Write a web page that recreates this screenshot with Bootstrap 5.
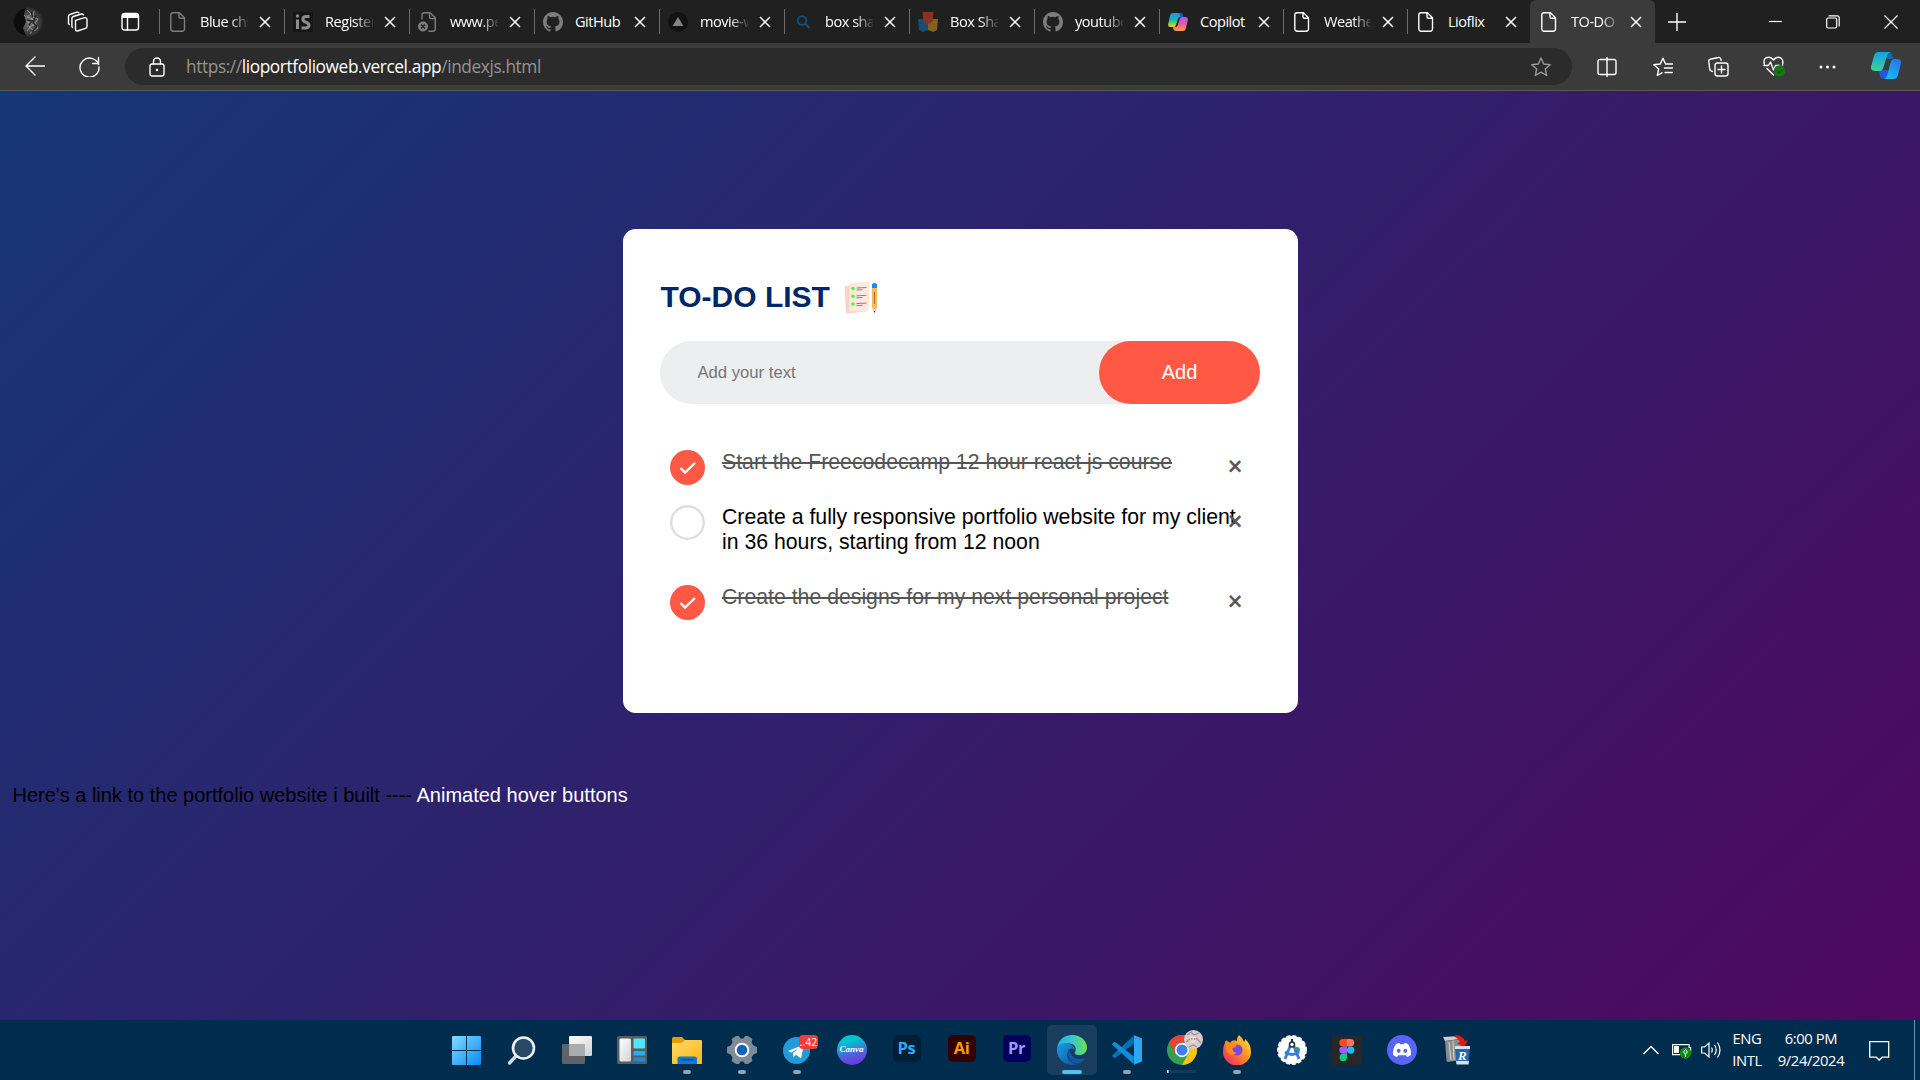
<!DOCTYPE html>
<html lang="en">
<head>
<meta charset="utf-8">
<meta name="viewport" content="width=device-width, initial-scale=1">
<title>TO-DO LIST</title>
<link rel="stylesheet" href="https://cdn.jsdelivr.net/npm/bootstrap@5.3.0/dist/css/bootstrap.min.css">
<style>
  body { width:1920px; height:1080px; overflow:hidden; font-family:"Open Sans","Noto Sans",sans-serif; color:#fff; line-height:1.2; }
  svg { display:block; flex:none; }
  .ln { fill:none; stroke:currentColor; stroke-width:1.4; stroke-linecap:round; stroke-linejoin:round; }
  /* browser tabs */
  .tabstrip { height:43px; background:#202020; }
  .avatar { width:30px; height:30px; margin-left:13px; }
  .btab { width:125px; height:43px; font-size:15px; padding:0 13px 0 0; }
  .btab.narrow { width:124px; }
  .btab::before { content:""; width:1px; height:25px; background:#6b6b6b; flex:none; }
  .btab.current { background:#3b3b3b; border-radius:6px 6px 0 0; width:125px; }
  .btab.current::before { background:transparent; }
  .fav { width:20px; height:20px; margin-left:8px; }
  .fav.dim { color:#7d7d7d; }
  .btab .ttl { width:50px; margin-left:12px; height:20px; line-height:18px; overflow:hidden; white-space:nowrap; font-size:14.6px; letter-spacing:-.5px;
    -webkit-mask-image:linear-gradient(90deg,#000 62%,transparent 104%); mask-image:linear-gradient(90deg,#000 62%,transparent 104%); }
  .btab .ttl.whole { -webkit-mask-image:none; mask-image:none; }
  .btab .cls { margin-left:11px; }
  /* toolbar */
  .toolrow { height:48px; background:#3b3b3b; border-bottom:1px solid #5a5a5a; padding-left:25px; }
  .urlpill { width:1447px; height:37px; border-radius:19px; background:#2b2b2b; margin-left:25px; padding:0 21px 0 24px; }
  .urltxt { font-size:17.3px; letter-spacing:-.4px; color:#949494; margin-left:21px; padding-top:1px; }
  .urltxt b { font-weight:400; color:#fff; }
  /* page */
  .sitepage { height:929px; background:linear-gradient(135deg,#153677,#4e085f); font-family:"Liberation Sans",Arial,sans-serif; color:#000; }
  .todo-app { width:675px; height:484px; margin:138px auto 0 623px; padding:50px 38px 0 37px; background:#fff; border-radius:12.5px; }
  .todo-app h2 { font-size:30px; font-weight:700; color:#002765; line-height:35px; height:37px; }
  .todo-app h2 span { margin:-3px 0 0 .5px; }
  .todo-row { height:63px; margin-top:25px; background:#edeef0; border-radius:38px; padding-left:37.5px; }
  .todo-row input { border:0; background:transparent; outline:0; font-size:16.67px; padding:0; color:#555; }
  .todo-row input::placeholder { color:#757575; opacity:1; }
  .add-btn { width:161px; height:63px; border:0; border-radius:50px; background:#ff5945; color:#fff; font-size:20px; padding:0 0 2px; }
  .todo-list { margin-top:31px; }
  .todo-list li { position:relative; font-size:21.25px; line-height:25px; padding:15px 0 15px 62px; }
  .todo-list li.done { color:#555; text-decoration:line-through; }
  .tick { position:absolute; left:10px; top:15px; }
  .rm { position:absolute; right:0; top:6px; width:50px; height:50px; line-height:50px; text-align:center; font-size:25px; color:#555; -webkit-text-stroke:.6px #555; text-decoration:none; display:inline-block; }
  .linkline { font-size:20px; line-height:23px; margin:71px 0 0 12.5px; }
  .linkline a { color:#fff; text-decoration:none; }
  /* taskbar */
  .winbar { height:60px; background:#002c4e; }
  .apps { margin-left:439px; }
  .app { position:relative; width:55px; height:60px; }
  .app.open::after { content:""; position:absolute; left:24px; bottom:6px; width:8px; height:4px; border-radius:2px; background:#93a3b1; }
  .app.active::before { content:""; position:absolute; left:3px; top:5px; width:50px; height:50px; border-radius:5px; background:#193e5d; }
  .app.active::after { left:18px; width:20px; background:#4cc2ff; }
  .app svg { position:relative; }
  .adobe { width:28px; height:27px; border-radius:5px; font-weight:700; font-size:16.5px; line-height:25px; text-align:center; letter-spacing:-.4px; }
  .count { position:absolute; left:30px; top:15px; width:19px; height:14px; border-radius:4px; background:#f23c34; font-size:10.5px; line-height:14px; text-align:center; }
  .canva { width:30px; height:30px; border-radius:50%; background:linear-gradient(165deg,#00c4cc 25%,#4a68d8 60%,#7d2ae8 95%); font:italic 700 9px/29px "Liberation Serif",serif; text-align:center; }
  .tray { margin-left:auto; font-size:14.8px; letter-spacing:-.4px; line-height:22px; text-align:center; }
  .tray div { position:relative; top:-1px; }
  .tray .edge { top:0; width:1px; height:60px; background:#7690a5; margin:0 5px 0 24px; }
</style>
<script src="https://cdn.jsdelivr.net/npm/bootstrap@5.3.0/dist/js/bootstrap.bundle.min.js"></script>
</head>
<body class="d-flex flex-column m-0">
<svg width="0" height="0" class="position-absolute">
  <defs>
    <linearGradient id="gEdge" x1="0" y1="0" x2="1" y2="0"><stop offset="0" stop-color="#2aa9e8"/><stop offset=".5" stop-color="#37c6d0"/><stop offset="1" stop-color="#6be04c"/></linearGradient>
    <linearGradient id="gEdge2" x1="0" y1="0" x2="1" y2="1"><stop offset="0" stop-color="#1b9de2"/><stop offset="1" stop-color="#0c4f9e"/></linearGradient>
    <linearGradient id="gWin" x1="0" y1="0" x2="1" y2="1"><stop offset="0" stop-color="#7fdcff"/><stop offset="1" stop-color="#0a8af5"/></linearGradient>
    <linearGradient id="gFold" x1="0" y1="0" x2="1" y2="1"><stop offset="0" stop-color="#ffd968"/><stop offset="1" stop-color="#fbb716"/></linearGradient>
    <linearGradient id="gGrey" x1="0" y1="0" x2="1" y2="1"><stop offset="0" stop-color="#fff"/><stop offset="1" stop-color="#cfd3d6"/></linearGradient>
    <linearGradient id="gFox" x1="1" y1="0" x2="0" y2="1"><stop offset="0" stop-color="#fff44f"/><stop offset=".4" stop-color="#ff9a1f"/><stop offset="1" stop-color="#f5156c"/></linearGradient>
    <linearGradient id="gCoA" x1="0" y1="0" x2="0" y2="1"><stop offset="0" stop-color="#129ff0"/><stop offset=".5" stop-color="#19b6a8"/><stop offset="1" stop-color="#f6d21c"/></linearGradient>
    <linearGradient id="gCoB" x1="0" y1="0" x2="0" y2="1"><stop offset="0" stop-color="#a35cf5"/><stop offset=".5" stop-color="#f0569b"/><stop offset="1" stop-color="#ff9b45"/></linearGradient>
    <linearGradient id="gCoC" x1=".4" y1="0" x2=".3" y2="1"><stop offset="0" stop-color="#11a3e8"/><stop offset="1" stop-color="#3fd18d"/></linearGradient>
    <linearGradient id="gCoD" x1=".8" y1="0" x2=".3" y2="1"><stop offset="0" stop-color="#2373ea"/><stop offset="1" stop-color="#17bdf3"/></linearGradient>
    <radialGradient id="gLion"><stop offset="0" stop-color="#777"/><stop offset="1" stop-color="#2c2c2c"/></radialGradient>
    <symbol id="doc" viewBox="0 0 20 20"><path class="ln" d="M5 .8h6.500l5 5V17a2.200 2.200 0 0 1-2.200 2.200H5A2.200 2.200 0 0 1 2.800 17V3A2.200 2.200 0 0 1 5 .8zM11 1v3.800A1.500 1.500 0 0 0 12.500 6.300h4"/></symbol>
    <symbol id="x" viewBox="0 0 12 12"><path d="M1 1l10 10M11 1L1 11" fill="none" stroke="currentColor" stroke-width="1.5"/></symbol>
    <symbol id="gh" viewBox="0 0 16 16"><path fill="currentColor" d="M8 0C3.580 0 0 3.580 0 8c0 3.540 2.290 6.530 5.470 7.590.4.070.55-.17.55-.38 0-.19-.010-.82-.010-1.490-2.010.37-2.530-.49-2.690-.94-.09-.23-.48-.94-.82-1.130-.28-.15-.68-.52-.010-.53.63-.010 1.080.58 1.230.82.72 1.210 1.870.87 2.330.66.070-.52.28-.87.51-1.070-1.780-.2-3.640-.89-3.640-3.950 0-.87.31-1.590.82-2.150-.08-.2-.36-1.020.08-2.120 0 0 .67-.21 2.200.82a7.600 7.600 0 0 1 4 0c1.530-1.040 2.200-.82 2.200-.82.44 1.100.16 1.920.08 2.120.51.56.82 1.270.82 2.150 0 3.070-1.870 3.750-3.650 3.950.29.25.54.73.54 1.480 0 1.070-.010 1.930-.010 2.200 0 .21.15.46.55.38A8 8 0 0 0 16 8c0-4.420-3.580-8-8-8z"/></symbol>
    <symbol id="tickon" viewBox="0 0 35 35"><circle cx="17.500" cy="17.500" r="17.500" fill="#ff5945"/><path d="M10.500 18l4.500 4.600 10-9.600" fill="none" stroke="#fff" stroke-width="2.300"/></symbol>
  </defs>
</svg>

<header>
  <div class="tabstrip d-flex align-items-center">
    <svg class="avatar" viewBox="0 0 30 30"><circle cx="15" cy="15" r="14.500" fill="url(#gLion)"/><path d="M1 12Q4 2 13 .8L11 8l2 7-3 6 3 8.200Q1 26 .5 15z" fill="#0d0d0d"/><path d="M14 3l4 4-4 3 6 2-5 3 6 3-5 2 4 3-3 4M21 4l-1 6 5 2-3 4 3 5-4 3M11 8l2 2M17 20l-3 4" fill="none" stroke="#a5a5a5" stroke-width=".8"/><path d="M18 5l2 5M23 8l-3 8 4 3-5 6M14 13l5 1-3 4" fill="none" stroke="#252525" stroke-width="1.300"/></svg>
    <svg width="22" height="22" viewBox="0 0 22 22" style="margin-left:24px"><path class="ln" d="M8.500 9.300l9-2.600a2 2 0 0 1 2.500 1.900v6.800a2 2 0 0 1-1.500 2l-8 2.600A1.500 1.500 0 0 1 8.500 18.500zM5.500 16.500l-.6-.8V7.500a2 2 0 0 1 1.400-2l8-2.500a2 2 0 0 1 2.200.9M2.300 13.500L1.500 12.500V5.500a2 2 0 0 1 1.400-2l7-2.300a2 2 0 0 1 2 .6" /></svg>
    <svg width="19" height="20" viewBox="0 0 19 20" style="margin-left:32px"><rect class="ln" x="1" y="1.500" width="16.500" height="16.500" rx="2.500"/><path d="M1 3.500A2.500 2.500 0 0 1 3.500 1h12A2.500 2.500 0 0 1 18 3.500V6H1z" fill="#fff"/><path class="ln" d="M6.500 6v12"/></svg>
    <nav class="d-flex" style="margin-left:19px">
      <div class="btab d-flex align-items-center"><svg class="fav dim"><use href="#doc"/></svg><span class="ttl">Blue chip</span><svg class="cls" width="12" height="12"><use href="#x"/></svg></div>
      <div class="btab d-flex align-items-center"><svg class="fav" viewBox="0 0 20 20"><rect width="20" height="20" fill="#161616"/><g fill="none" stroke="#8c8c8c" stroke-width="3"><path d="M4.500 7.500V17M16.500 4.500H13Q10 4.500 10 7t3 3.300 3 3-3 2.700H8.500"/></g><circle cx="4.500" cy="4" r="1.700" fill="#8c8c8c"/></svg><span class="ttl">Register</span><svg class="cls" width="12" height="12"><use href="#x"/></svg></div>
      <div class="btab d-flex align-items-center"><svg class="fav dim" viewBox="0 0 20 20"><path class="ln" d="M4 7V3A2.200 2.200 0 0 1 6.200.8H12l5.300 5V17a2.200 2.200 0 0 1-2.200 2.200H11M11.500 1v4a1.500 1.500 0 0 0 1.500 1.500h4"/><circle cx="5" cy="14.500" r="5" fill="currentColor"/><path d="M3 12.500l4 4M7 12.500l-4 4" stroke="#202020" stroke-width="1.300"/></svg><span class="ttl">www.pe</span><svg class="cls" width="12" height="12"><use href="#x"/></svg></div>
      <div class="btab d-flex align-items-center"><svg class="fav dim"><use href="#gh"/></svg><span class="ttl whole">GitHub</span><svg class="cls" width="12" height="12"><use href="#x"/></svg></div>
      <div class="btab d-flex align-items-center"><svg class="fav" viewBox="0 0 20 20"><circle cx="10" cy="10" r="10" fill="#121212"/><path d="M10 5l5.300 9H4.700z" fill="#858585"/></svg><span class="ttl">movie-w</span><svg class="cls" width="12" height="12"><use href="#x"/></svg></div>
      <div class="btab d-flex align-items-center"><svg class="fav" viewBox="0 0 20 20"><g fill="none" stroke="#14507f" stroke-width="1.800"><circle cx="9" cy="8.500" r="4.300"/><path d="M12 11.500l4.500 4.500"/></g></svg><span class="ttl">box sha</span><svg class="cls" width="12" height="12"><use href="#x"/></svg></div>
      <div class="btab d-flex align-items-center"><svg class="fav" viewBox="0 0 20 20"><path d="M0 7h10v11l-5 2-4-2z" fill="#174d73"/><path d="M10 7h10l-1 11-4 2-5-2z" fill="#87601b"/><path d="M4.500 0h11l-1 10-4.500 2-4.500-2z" fill="#87331f"/></svg><span class="ttl">Box Sha</span><svg class="cls" width="12" height="12"><use href="#x"/></svg></div>
      <div class="btab d-flex align-items-center"><svg class="fav dim"><use href="#gh"/></svg><span class="ttl">youtube</span><svg class="cls" width="12" height="12"><use href="#x"/></svg></div>
      <div class="btab narrow d-flex align-items-center"><svg class="fav" viewBox="0 0 20 20"><path d="M5 1h7.500q1.500 0 2 2l.5 2H12q-1.500 0-2 2l-2 6q-.7 2-2 2H2.500Q-.5 15 .2 12L2 4Q2.700 1 5 1z" fill="url(#gCoA)"/><path d="M11 1h2q1.500 0 2 2l.7 2H12.500z" fill="#2150d0"/><path d="M15 19H8q-2 0-2.600-2L5 15h2.500q1.700 0 2.200-2l2-6q.6-2 2.300-2H17q3.500 0 2.700 3.500L18 16q-.7 3-3 3z" fill="url(#gCoB)"/></svg><span class="ttl whole">Copilot</span><svg class="cls" width="12" height="12"><use href="#x"/></svg></div>
      <div class="btab narrow d-flex align-items-center"><svg class="fav"><use href="#doc"/></svg><span class="ttl">Weathe</span><svg class="cls" width="12" height="12"><use href="#x"/></svg></div>
      <div class="btab narrow d-flex align-items-center" style="width:123px"><svg class="fav"><use href="#doc"/></svg><span class="ttl whole">Lioflix</span><svg class="cls" width="12" height="12"><use href="#x"/></svg></div>
      <div class="btab current d-flex align-items-center"><svg class="fav"><use href="#doc"/></svg><span class="ttl">TO-DO</span><svg class="cls" width="12" height="12"><use href="#x"/></svg></div>
    </nav>
    <svg width="18" height="18" viewBox="0 0 18 18" style="margin-left:13px"><path class="ln" d="M9 .5v17M.5 9h17"/></svg>
    <div class="d-flex align-items-center ms-auto" style="margin-right:22px;gap:44px">
      <svg width="13" height="13"><path d="M0 6.500h13" stroke="#fff" stroke-width="1.200"/></svg>
      <svg width="14" height="14" viewBox="0 0 14 14"><rect class="ln" x=".7" y="3" width="10" height="10" rx="1.500" style="stroke-width:1.200"/><path class="ln" d="M3 .8h8A2 2 0 0 1 13.200 3v8" style="stroke-width:1.200"/></svg>
      <svg width="14" height="14" viewBox="0 0 14 14"><path d="M.5.500l13 13M13.500.500l-13 13" stroke="#fff" stroke-width="1.200"/></svg>
    </div>
  </div>
  <div class="toolrow d-flex align-items-center">
    <svg width="20" height="20" viewBox="0 0 20 20" style="margin-top:-2px"><path class="ln" d="M10 1L1 10l9 9M1 10h18.500"/></svg>
    <svg width="21" height="21" viewBox="0 0 21 21" style="margin:-1px 0 0 34px"><path class="ln" d="M19.500 8.500A9.500 9.500 0 1 0 20 11M19.500 1.500v6h-6"/></svg>
    <div class="urlpill d-flex align-items-center">
      <svg width="16" height="20" viewBox="0 0 16 20"><rect class="ln" x="1" y="7" width="14" height="12" rx="2"/><path class="ln" d="M4.500 7V4.500a3.500 3.500 0 0 1 7 0V7"/><circle cx="8" cy="13" r="1.200" fill="#fff"/></svg>
      <span class="urltxt">https://<b>lioportfolioweb.vercel.app</b>/indexjs.html</span>
      <svg class="ms-auto" width="20" height="20" viewBox="0 0 20 20" style="color:#9a9a9a"><path class="ln" d="M10 1l2.700 6 6.500.7-4.900 4.300 1.400 6.500L10 15.200l-5.700 3.300L5.700 12 .8 7.700 7.300 7z"/></svg>
    </div>
    <svg width="20" height="20" viewBox="0 0 20 20" style="margin-left:25px"><path class="ln" d="M7 2.500H3A2 2 0 0 0 1 4.500v11a2 2 0 0 0 2 2h4M13 2.500h4a2 2 0 0 1 2 2v11a2 2 0 0 1-2 2h-4M10 .5v19M10 2.500h3M7 2.500h3M7 17.500h6"/></svg>
    <svg width="20" height="20" viewBox="0 0 20 20" style="margin-left:36px"><path class="ln" d="M12.500 7L10 1.200 7.300 7 .8 7.700 5.700 12l-1.400 6.500L9 15.800M12.500 7h7M11.500 11h8M12 15.500h7.500"/></svg>
    <svg width="21" height="21" viewBox="0 0 21 21" style="margin-left:35px"><rect class="ln" x="7" y="7" width="13" height="13" rx="2.500"/><path class="ln" d="M13.500 10v7M10 13.500h7M4.500 15.500l-1.800-.8a2 2 0 0 1-1-1.500L.8 5.500a2 2 0 0 1 1.500-2.300l8-1.700a2 2 0 0 1 2.400 1.300l.4 1.500"/></svg>
    <svg width="23" height="21" viewBox="0 0 23 21" style="margin-left:34px"><path class="ln" d="M1.500 9Q-.5 1.500 5.500 1.200 8.500 1 10.500 4 12.500 1 15.500 1.200 21 1.800 19.500 9M1 9.500h4.500L7.500 6l3 8 2-4.500h4M4 12.500l6.500 6.500"/><circle cx="16.500" cy="15" r="5.800" fill="#107c10"/><path d="M14 15l2 2 3.500-3.500" fill="none" stroke="#3b3b3b" stroke-width="1.300"/></svg>
    <svg width="17" height="4" viewBox="0 0 17 4" style="margin-left:33px"><g fill="#fff"><circle cx="2" cy="2" r="1.500"/><circle cx="8.500" cy="2" r="1.500"/><circle cx="15" cy="2" r="1.500"/></g></svg>
    <svg width="30" height="27" viewBox="0 0 30 27" style="margin:-2px 0 0 35px"><path d="M18 0q2.500 0 3.300 3l1 4H17l-5-3z" fill="#0a6ea8"/><path d="M8 18h8l3 3-2 6h-4q-3 0-4-3z" fill="#2059dc"/><path d="M7.500 0H19q-2 1-3 4l-3.500 11q-1 4-4 4H4q-5 0-3.800-5L3 4Q4 0 7.500 0z" fill="url(#gCoC)"/><path d="M22.500 27H13q2.500-1 3.300-4l3-11.500q1-4.500 4-4.500H26q5 0 3.800 5L27 23q-1 4-4.500 4z" fill="url(#gCoD)"/></svg>
  </div>
</header>

<main class="sitepage overflow-hidden">
  <section class="todo-app">
    <h2 class="d-flex align-items-center m-0"><span>TO-DO LIST</span>
      <svg width="34" height="32" viewBox="0 0 34 32" style="margin-left:14px"><path d="M.5 4.500L6 3.500 22 29.500 3 31.500q-1 0-1-1z" fill="#ffd2c4"/><path d="M5.500.8L25.500 0l-.6 26.500q0 2.500-2.500 2.600l-17 .7z" fill="#ffe8dc"/><g fill="#3dff3a"><circle cx="9" cy="6.500" r="1.800"/><circle cx="9" cy="14.300" r="1.800"/><circle cx="9" cy="22" r="1.800"/></g><path d="M12.500 6l10-.5M12.500 8l6-.3M12.500 13.800l10-.5M12.500 15.800l6-.3M12.500 21.600l10-.5M12.500 23.600l6-.3" stroke="#83709b" stroke-width=".9"/><path d="M28 4h5v22h-5z" fill="#ffb654"/><path d="M28 2.500Q28 1 30.500 1T33 2.500V6h-5z" fill="#1688f0"/><path d="M30.500 10v12" stroke="#9a6a35" stroke-width=".9"/><path d="M28 26h5l-2.500 5z" fill="#f7bfae"/><path d="M29.700 29h1.600l-.8 2z" fill="#222"/></svg>
    </h2>
    <div class="todo-row d-flex align-items-center justify-content-between">
      <input type="text" class="flex-grow-1" placeholder="Add your text">
      <button class="add-btn">Add</button>
    </div>
    <ul class="todo-list list-unstyled mb-0">
      <li class="done"><svg class="tick" width="35" height="35"><use href="#tickon"/></svg>Start the Freecodecamp 12 hour react js course<span class="rm">×</span></li>
      <li><svg class="tick" width="35" height="35"><circle cx="17.500" cy="17.500" r="16.300" fill="#fff" stroke="#dedede" stroke-width="2.400"/></svg>Create a fully responsive portfolio website for my client<br>in 36 hours, starting from 12 noon<span class="rm">×</span></li>
      <li class="done"><svg class="tick" width="35" height="35"><use href="#tickon"/></svg>Create the designs for my next personal project<span class="rm">×</span></li>
    </ul>
  </section>
  <p class="linkline">Here's a link to the portfolio website i built ---- <a href="#">Animated hover buttons</a></p>
</main>

<footer class="winbar d-flex">
  <div class="apps d-flex">
    <div class="app d-flex align-items-center justify-content-center"><svg width="29" height="29" viewBox="0 0 29 29"><path fill="url(#gWin)" d="M0 1q0-1 1-1h13v14H0zM15 0h13q1 0 1 1v13H15zM0 15h14v14H1q-1 0-1-1zM15 15h14v13q0 1-1 1H15z"/></svg></div>
    <div class="app d-flex align-items-center justify-content-center"><svg width="28" height="29" viewBox="0 0 28 29"><path d="M9 19l-7.500 8" stroke="#d5dadd" stroke-width="3.400" stroke-linecap="round"/><circle cx="15.500" cy="12" r="10.500" fill="#284a66" stroke="#eef0f1" stroke-width="2.600"/></svg></div>
    <div class="app d-flex align-items-center justify-content-center"><svg width="30" height="28" viewBox="0 0 30 28"><rect y="8" width="23" height="20" rx="1" fill="#5f6367"/><rect x="7" width="23" height="20" rx="1" fill="url(#gGrey)"/><rect x="7" y="8" width="16" height="12" fill="#a9adb0"/></svg></div>
    <div class="app d-flex align-items-center justify-content-center"><svg width="30" height="28" viewBox="0 0 30 28"><rect width="30" height="28" rx="1.500" fill="#5a5d60"/><rect x="2.500" y="2.500" width="11.500" height="23" rx="1.500" fill="url(#gGrey)"/><rect x="16.500" y="2.500" width="11.500" height="10" rx="1" fill="#50e6ff"/><rect x="16.500" y="15" width="11.500" height="4.500" rx="1" fill="#28afea"/><rect x="16.500" y="21.500" width="11.500" height="4" rx="1" fill="#1490df"/></svg></div>
    <div class="app open d-flex align-items-center justify-content-center"><svg width="30" height="27" viewBox="0 0 30 27"><path d="M0 1.500Q0 0 1.500 0H10l3 3v6H0z" fill="#e0a100"/><path d="M0 6h9.500l3.500-3h16q1 0 1 1v23H1q-1 0-1-1z" fill="url(#gFold)"/><path d="M5.500 27v-5.500Q5.500 19.500 8 19.500h14.500q2.500 0 2.500 2V27z" fill="#1576cc"/><path d="M8.500 22.800h13" stroke="#0b4c8e" stroke-width="1.200"/></svg></div>
    <div class="app open d-flex align-items-center justify-content-center"><svg width="30" height="28" viewBox="0 0 30 28"><path d="M9 0h3l1.500 2.500h3L18 0h3l4.500 3-1 3.500 2 3L30 11v6l-3.500 1.500-2 3 1 3.500L21 28h-3l-1.500-2.500h-3L12 28H9l-4.500-3 1-3.500-2-3L0 17v-6l3.500-1.500 2-3-1-3.500z" fill="#7e8b96"/><circle cx="15" cy="14" r="6.300" fill="#0e63bd" stroke="#fff" stroke-width="2"/></svg></div>
    <div class="app open d-flex align-items-center justify-content-center"><svg width="27" height="27" viewBox="0 0 27 27"><circle cx="13.500" cy="13.500" r="13.500" fill="#239bd7"/><path d="M5 14l16-6.500-3 14-5-3.700-2.500 2.500-.5-4.300 6-5-7.500 4.500z" fill="#fff"/></svg><span class="count">..42</span></div>
    <div class="app d-flex align-items-center justify-content-center"><div class="canva">Canva</div></div>
    <div class="app d-flex align-items-center justify-content-center pb-1"><div class="adobe" style="background:#001e36;color:#31a8ff">Ps</div></div>
    <div class="app d-flex align-items-center justify-content-center pb-1"><div class="adobe" style="background:#330000;color:#ff9a00">Ai</div></div>
    <div class="app d-flex align-items-center justify-content-center pb-1"><div class="adobe" style="background:#00005b;color:#9999ff">Pr</div></div>
    <div class="app open active d-flex align-items-center justify-content-center"><svg width="30" height="30" viewBox="0 0 30 30"><path d="M0 14C1 4 8 0 15 0c9 0 15 6 15 12.500 0 5-4 7.500-7.500 7.500-4 0-5.500-1.500-4.500-3 1.500-2.500 1-8-5-8.500C6 8 1 11 0 14z" fill="url(#gEdge)"/><path d="M0 14C1 9.500 5.500 7.800 10 8.300c5 .5 8 4 8 7.500-1-3-5-3-6.500-.5C8 21 12 29 21.500 29 11 33-1 25 0 14z" fill="url(#gEdge2)"/><path d="M12 14.500C9 20 13.500 29.500 22 28.500q4-1.500 6.500-6Q25 24.500 21 24q-7-1-9-9.500z" fill="#0c5aa8"/></svg></div>
    <div class="app open d-flex align-items-center justify-content-center"><svg width="30" height="30" viewBox="0 0 30 30"><path d="M22 8.500L3.500 22.800q-.8.600-1.500 0l-1.500-1.300q-.8-.8 0-1.600L21.500 1z" fill="#0a6fb8"/><path d="M22 21.500L3.500 7.200q-.8-.6-1.500 0L.5 8.500q-.8.800 0 1.600L21.500 29z" fill="#118ed5"/><path d="M21.500 0L30 3.500v23L21.500 30q1-1 .5-3V3q.5-2-.5-3z" fill="#2aa9f2"/></svg></div>
    <div class="app d-flex align-items-center justify-content-center"><svg width="36" height="46" viewBox="0 0 36 46" style="left:3px"><circle cx="15" cy="23" r="15" fill="#34a04f"/><path d="M2 15.500A15 15 0 0 1 28 15.500H15l-6.500 11z" fill="#e94335"/><path d="M28 15.500A15 15 0 0 1 15 38l6.500-11.500q2-5-1.500-11z" fill="#fbc116"/><circle cx="15" cy="23" r="7.200" fill="#fff"/><circle cx="15" cy="23" r="5.500" fill="#3c80ee"/><circle cx="26.500" cy="12.500" r="9.500" fill="#d9ccd0"/><path d="M20 8l4-3 3 3 5-2M19 15l4-3M29 11l5 5M22 20l4-2 4 2" fill="none" stroke="#a08e97" stroke-width="1.300"/><path d="M23 10q3-3 6 0v4q-3 4-6 0z" fill="#f4d3cc"/><path d="M24 12h1.500M27 12h1.500" stroke="#7a5560"/><rect y="43" width="29" height="3" fill="#143a59"/><rect y="43" width="1.500" height="3" fill="#fff"/></svg></div>
    <div class="app open d-flex align-items-center justify-content-center"><svg width="28" height="30" viewBox="0 0 28 30"><path d="M16 0q4 3 5 7 1-1 1-3 6 5 6 13A14 13.500 0 0 1 0 17Q0 9 4 5q.5 3 3 3Q9 4 14 6q0-4 2-6z" fill="url(#gFox)"/><circle cx="14" cy="15" r="5.500" fill="#7a45d8"/><path d="M2 6q4 0 7 3l5 .5q-1 3-4.500 3.500Q9 17 14 18q-6 4-10-1z" fill="#ff8b1e"/></svg></div>
    <div class="app d-flex align-items-center justify-content-center"><svg width="30" height="30" viewBox="0 0 30 30"><circle cx="15" cy="15" r="14" fill="#fff" stroke="#f4f6f8" stroke-width="2" stroke-dasharray="4 2"/><circle cx="20" cy="15" r="3" fill="#33a852"/><path d="M14 9L8 24M16 9l6 15M8 17q7 5 14 0" fill="none" stroke="#3779e5" stroke-width="2.800"/><circle cx="15" cy="9.500" r="2.500" fill="#fff" stroke="#203040" stroke-width="1.500"/><path d="M15 4v3" stroke="#203040" stroke-width="2"/></svg></div>
    <div class="app d-flex align-items-center justify-content-center"><svg width="30" height="30" viewBox="0 0 30 30"><rect width="30" height="30" rx="2" fill="#272727"/><path d="M15 4h-4a3.700 3.700 0 0 0 0 7.400h4z" fill="#f24e1e"/><path d="M15 4h3.500a3.700 3.700 0 0 1 0 7.400H15z" fill="#ff7262"/><path d="M15 11.400h-4a3.700 3.700 0 0 0 0 7.400h4z" fill="#a259ff"/><circle cx="18.700" cy="15.100" r="3.700" fill="#1abcfe"/><path d="M15 18.800h-4a3.700 3.700 0 1 0 4 3.700z" fill="#0acf83"/></svg></div>
    <div class="app d-flex align-items-center justify-content-center"><svg width="30" height="30" viewBox="0 0 30 30"><circle cx="15" cy="15" r="15" fill="#5865f2"/><path d="M9 9q2-1 3.500-1l.7 1.200h3.600L17.500 8Q19 8 21 9q3.500 5 3 11-2 1.500-4 2l-1.200-1.800h-7.600L10 22q-2-.5-4-2-.5-6 3-11z" fill="#fff"/><ellipse cx="11.700" cy="15.800" rx="1.900" ry="2.100" fill="#5865f2"/><ellipse cx="18.300" cy="15.800" rx="1.900" ry="2.100" fill="#5865f2"/></svg></div>
    <div class="app d-flex align-items-center justify-content-center"><svg width="28" height="30" viewBox="0 0 28 30"><path d="M0 2l17-1v3L2 6z" fill="#d0d0d0"/><path d="M2 6l16-2v21L5 27q-1.500 0-1.500-2z" fill="#8d8d8d"/><path d="M6 7l2 18M10 6l1 19" stroke="#d5d5d5"/><path d="M10 1q8-3 12 5l3-1-4 8-7-5 3-1q-2-4-7-6z" fill="#e01b1b"/><path d="M12 12h15l-1.500 17h-12z" fill="#2467ad"/><path d="M12 11h15v3H12zM13 26h13l-.5 3.500h-12z" fill="#d9e2ea"/><text x="15" y="25" font-family="Liberation Serif,serif" font-size="13" font-style="italic" font-weight="700" fill="#fff">R</text></svg></div>
  </div>
  <div class="tray d-flex align-items-center">
    <svg width="16" height="10" viewBox="0 0 16 10"><path d="M.5 9L8 1.500 15.500 9" fill="none" stroke="#fff" stroke-width="1.300"/></svg>
    <svg width="20" height="16" viewBox="0 0 20 16" style="margin:2px 0 0 13px"><path d="M.6 1.600h16.500v3h1.500v4h-1.500v3H.6z" fill="none" stroke="#fff" stroke-width="1.200"/><path d="M2 3h5v7H2z" fill="#fff"/><circle cx="13.500" cy="10" r="5.800" fill="#0f8a1c"/><path d="M13.500 14v-3q-2.500-1-1.500-3l1.500-1.500L15 8q1 2-1.500 3" fill="none" stroke="#fff" stroke-width="1"/></svg>
    <svg width="21" height="18" viewBox="0 0 21 18" style="margin-left:9px"><g fill="none" stroke="#fff" stroke-width="1.200"><path d="M.6 6h3L8 2v14l-4.400-4H.6zM10.500 6.500q1.500 2.500 0 5M13.500 4q3.500 5 0 10M16.500 1.500q5 7.500 0 15"/></g></svg>
    <div style="width:34px;margin-left:8px">ENG<br>INTL</div>
    <div style="width:74px;margin-left:10px">6:00 PM<br>9/24/2024</div>
    <svg width="21" height="21" viewBox="0 0 21 21" style="margin-left:21px"><path d="M.7 1.700h19v15.500h-6.500L10.200 20l-3-2.800H.7z" fill="none" stroke="#fff" stroke-width="1.300"/></svg>
    <div class="edge"></div>
  </div>
</footer>
</body>
</html>
